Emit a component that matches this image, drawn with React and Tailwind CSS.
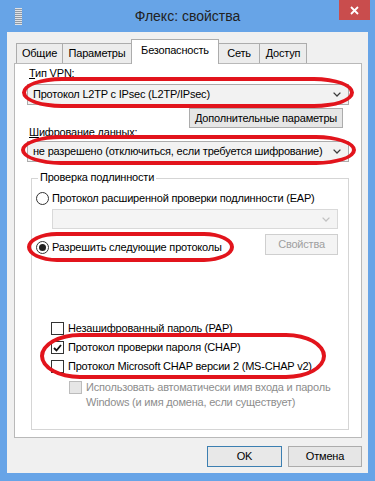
import React from "react";

function Chevron({ color = "#3c3c3c" }) {
  return (
    <svg width="8" height="5" viewBox="0 0 8 5" className="shrink-0">
      <path d="M0.6 0.6 L4 4 L7.4 0.6" fill="none" stroke={color} strokeWidth="1.3" />
    </svg>
  );
}

function Combo({ text, disabled, className = "" }) {
  return (
    <div
      className={`flex items-center justify-between pl-[5px] pr-[7px] border ${
        disabled ? "border-[#d9d9d9] bg-[#f4f4f4]" : "border-[#acacac] bg-[#f2f2f2]"
      } ${className}`}
    >
      <span className="whitespace-nowrap">{text}</span>
      <Chevron color={disabled ? "#c2c2c2" : "#3c3c3c"} />
    </div>
  );
}

function Radio({ checked }) {
  return (
    <span className="w-[13px] h-[13px] rounded-full border border-[#333] bg-white flex items-center justify-center shrink-0">
      {checked && <span className="w-[7px] h-[7px] rounded-full bg-[#222]" />}
    </span>
  );
}

function Check({ checked, disabled }) {
  return (
    <span
      className={`w-[13px] h-[13px] border flex items-center justify-center shrink-0 ${
        disabled ? "border-[#bcbcbc] bg-[#e6e6e6]" : "border-[#333] bg-white"
      }`}
    >
      {checked && (
        <svg width="9" height="8" viewBox="0 0 9 8">
          <path d="M1 4 L3.5 6.5 L8 1" fill="none" stroke="#111" strokeWidth="1.8" />
        </svg>
      )}
    </span>
  );
}

function Tab({ label, width, active, first }) {
  return (
    <div
      className={`${width} flex items-center justify-center border-t border-r border-[#acacac] ${
        first ? "border-l" : ""
      } ${
        active
          ? "h-[25px] bg-white border-l -ml-px -mb-px pb-[3px] relative z-10"
          : "h-[20px] bg-[#ececec]"
      }`}
    >
      {label}
    </div>
  );
}

export default function App() {
  return (
    <div className="relative w-[375px] h-[481px] bg-[#67a4e7] flex flex-col font-['Liberation_Sans',Arial,sans-serif] text-[11px] tracking-[-0.2px] text-black overflow-hidden">
      {/* TITLE BAR */}
      <div className="h-[32px] flex items-start">
        <div className="w-[60px] pl-[15px] pt-[8px]">
          <svg width="7" height="17" viewBox="0 0 7 17">
            <rect x="0" y="0" width="7" height="17" fill="#dfe3e8" />
            {[1, 3, 5, 7, 9, 11, 13, 15].map((y) => (
              <rect key={y} x="0" y={y} width="7" height="1" fill="#8f98a3" />
            ))}
          </svg>
        </div>
        <div className="flex-1 h-[32px] flex items-center justify-center text-[14px] tracking-normal text-[#222]">
          Флекс: свойства
        </div>
        <div className="w-[60px] flex justify-end pr-[5px]">
          <div className="w-[31px] h-[20px] bg-[#c94d4d] flex items-center justify-center">
            <svg width="9" height="9" viewBox="0 0 9 9">
              <path d="M1 1 L8 8 M8 1 L1 8" stroke="#fff" strokeWidth="1.8" />
            </svg>
          </div>
        </div>
      </div>

      {/* CLIENT */}
      <div className="mx-[7px] h-[441px] bg-[#f0f0f0] flex flex-col">
        {/* TABS */}
        <div className="h-[31px] flex items-end pl-[9px]">
          <Tab label="Общие" width="w-[47px]" first />
          <Tab label="Параметры" width="w-[69px]" />
          <Tab label="Безопасность" width="w-[88px]" active />
          <Tab label="Сеть" width="w-[41px]" />
          <Tab label="Доступ" width="w-[47px]" />
        </div>

        {/* PANEL */}
        <div className="ml-[7px] w-[348px] h-[375px] border border-[#b9b9b9] bg-white pl-[12px] flex flex-col">
          <div className="w-[322px] flex flex-col">
            <div className="mt-[2px] h-[15px] leading-[15px] ml-[2px]">
              <span className="underline">Т</span>ип VPN:
            </div>
            <Combo text="Протокол L2TP с IPsec (L2TP/IPsec)" className="mt-[3px] h-[21px]" />
            <div className="mt-[3px] h-[20px] w-[154px] ml-auto mr-[6px] border border-[#acacac] bg-[#e6e6e6] flex items-center justify-center whitespace-nowrap">
              Дополнительные параметры
            </div>
            <div className="-mt-[3px] h-[15px] leading-[15px] ml-[2px]">
              <span className="underline">Ш</span>ифрование данных:
            </div>
            <Combo
              text="не разрешено (отключиться, если требуется шифрование)"
              className="mt-[1px] h-[21px]"
            />

            {/* GROUPBOX */}
            <div className="relative mt-[16px] ml-[4px] w-[318px] h-[252px] border border-[#d5d5d5] flex flex-col">
              <span className="absolute -top-[9px] left-[6px] bg-white px-[2px] leading-[15px]">
                Проверка подлинности
              </span>

              <div className="mt-[12px] ml-[4px] h-[15px] flex items-center gap-[3px] whitespace-nowrap">
                <Radio />
                <span>Протокол расширенной проверки подлинности (EAP)</span>
              </div>
              <Combo text="" disabled className="mt-[3px] ml-[20px] w-[286px] h-[20px]" />

              <div className="mt-[5px] h-[21px] flex justify-between">
                <div className="mt-[6px] ml-[4px] h-[15px] flex items-center gap-[3px] whitespace-nowrap">
                  <Radio checked />
                  <span>Разрешить следующие протоколы</span>
                </div>
                <div className="mr-[10px] w-[73px] h-[21px] border border-[#cfcfcf] bg-[#f4f4f4] text-[#a0a0a0] flex items-center justify-center">
                  Свойства
                </div>
              </div>

              <div className="mt-[66px] ml-[19px] h-[15px] flex items-center gap-[4px] whitespace-nowrap">
                <Check />
                <span>Незашифрованный пароль (PAP)</span>
              </div>
              <div className="mt-[4px] ml-[19px] h-[15px] flex items-center gap-[4px] whitespace-nowrap">
                <Check checked />
                <span>Протокол проверки пароля (CHAP)</span>
              </div>
              <div className="mt-[4px] ml-[19px] h-[15px] flex items-center gap-[4px] whitespace-nowrap">
                <Check />
                <span>Протокол Microsoft CHAP версии 2 (MS-CHAP v2)</span>
              </div>
              <div className="mt-[6px] ml-[37px] flex items-start gap-[4px] text-[#8d8d8d] whitespace-nowrap">
                <div className="h-[15px] flex items-center">
                  <Check disabled />
                </div>
                <div className="leading-[15px]">
                  Использовать автоматически имя входа и пароль
                  <br />
                  Windows (и имя домена, если существует)
                </div>
              </div>
            </div>
          </div>
        </div>

        {/* BUTTONS */}
        <div className="mt-[8px] h-[21px] flex justify-end gap-[6px] mr-[6px]">
          <div className="w-[75px] h-[21px] border border-[#3c7fb1] bg-[#e8e8e8] flex items-center justify-center">
            OK
          </div>
          <div className="w-[74px] h-[21px] border border-[#acacac] bg-[#e6e6e6] flex items-center justify-center">
            Отмена
          </div>
        </div>
      </div>

      {/* RED ANNOTATIONS */}
      <div className="absolute left-[22px] top-[77px] w-[332px] h-[31px] border-[4px] border-[#e2141c] rounded-[40px/50%]" />
      <div className="absolute left-[21px] top-[135px] w-[335px] h-[30px] border-[4px] border-[#e2141c] rounded-[40px/50%]" />
      <div className="absolute left-[27px] top-[232px] w-[207px] h-[30px] border-[4px] border-[#e2141c] rounded-[30px/50%]" />
      <div className="absolute left-[40px] top-[333px] w-[286px] h-[46px] border-[4px] border-[#e2141c] rounded-[40px/50%]" />
    </div>
  );
}
